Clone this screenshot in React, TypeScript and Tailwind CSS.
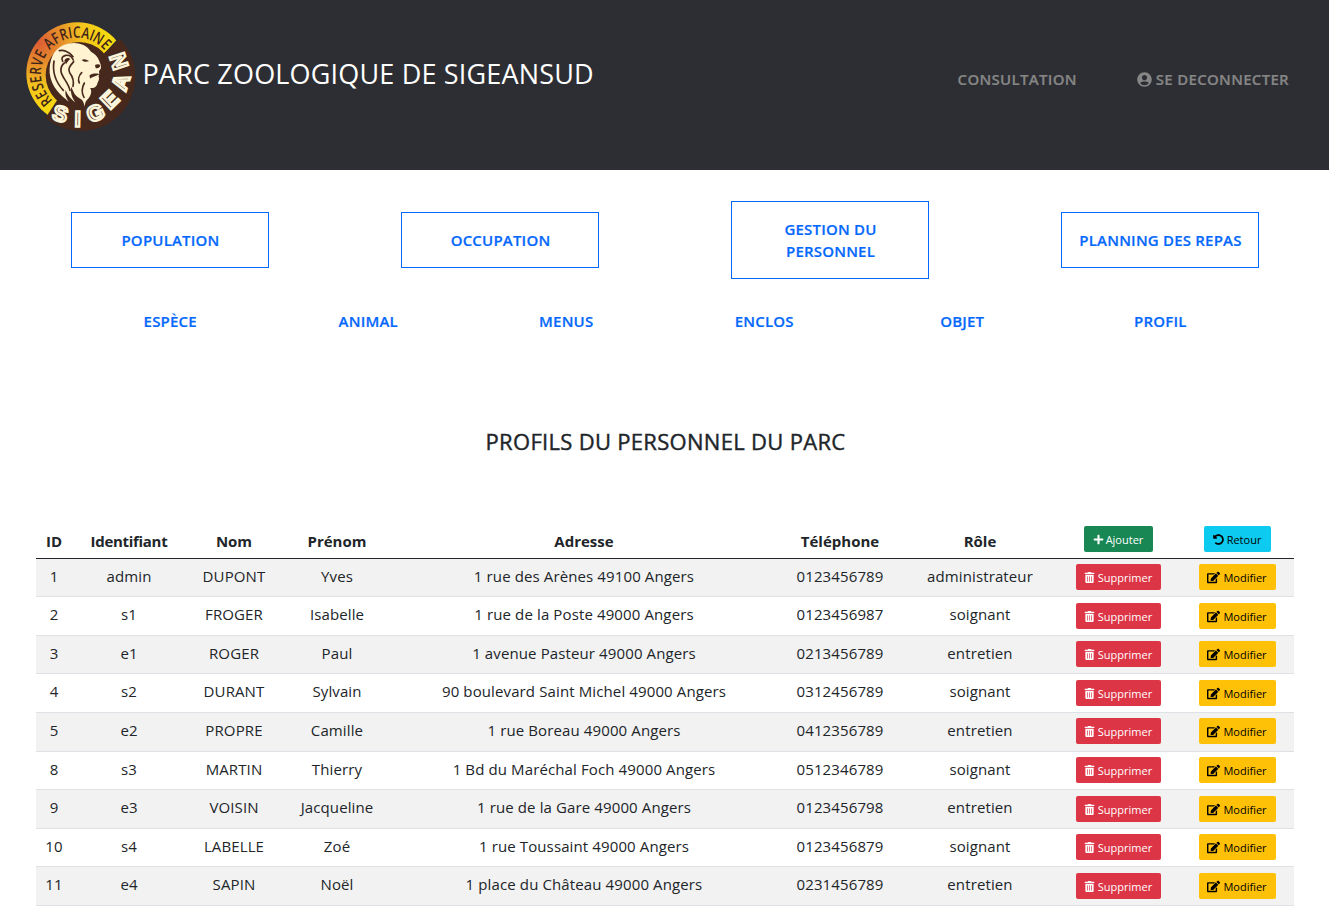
import React from "react";
import { FaEdit, FaPlus, FaTrashAlt, FaUndoAlt, FaUserCircle } from "react-icons/fa";

const sections = ["POPULATION", "OCCUPATION", "GESTION DU PERSONNEL", "PLANNING DES REPAS"];
const links = ["ESPÈCE", "ANIMAL", "MENUS", "ENCLOS", "OBJET", "PROFIL"];
const headings = ["ID", "Identifiant", "Nom", "Prénom", "Adresse", "Téléphone", "Rôle"];
const columns = [36, 114, 96, 110, 384, 128, 152, 124, 114];

const staff = [
  ["1", "admin", "DUPONT", "Yves", "1 rue des Arènes 49100 Angers", "0123456789", "administrateur"],
  ["2", "s1", "FROGER", "Isabelle", "1 rue de la Poste 49000 Angers", "0123456987", "soignant"],
  ["3", "e1", "ROGER", "Paul", "1 avenue Pasteur 49000 Angers", "0213456789", "entretien"],
  ["4", "s2", "DURANT", "Sylvain", "90 boulevard Saint Michel 49000 Angers", "0312456789", "soignant"],
  ["5", "e2", "PROPRE", "Camille", "1 rue Boreau 49000 Angers", "0412356789", "entretien"],
  ["8", "s3", "MARTIN", "Thierry", "1 Bd du Maréchal Foch 49000 Angers", "0512346789", "soignant"],
  ["9", "e3", "VOISIN", "Jacqueline", "1 rue de la Gare 49000 Angers", "0123456798", "entretien"],
  ["10", "s4", "LABELLE", "Zoé", "1 rue Toussaint 49000 Angers", "0123456879", "soignant"],
  ["11", "e4", "SAPIN", "Noël", "1 place du Château 49000 Angers", "0231456789", "entretien"],
];

const sigean = [
  { c: "S", x: 136, y: 311, r: 16 },
  { c: "I", x: 188, y: 327, r: 1 },
  { c: "G", x: 241, y: 308, r: -24 },
  { c: "E", x: 284, y: 269, r: -44 },
  { c: "A", x: 317, y: 216, r: -72 },
  { c: "N", x: 311, y: 154, r: -108 },
];

// Angles in degrees, clockwise from the right, of each letter on the ring.
const ringLetters: [string, number][] = [
  ["R", 138],
  ["E", 149.5],
  ["S", 161],
  ["E", 172],
  ["R", 184],
  ["V", 196.5],
  ["E", 208.5],
  ["A", 227],
  ["F", 239],
  ["R", 251],
  ["I", 260.5],
  ["C", 269.5],
  ["A", 282],
  ["I", 291.5],
  ["N", 301.5],
  ["E", 315],
];

function Logo() {
  return (
    <svg className="h-[112px] w-[110px] shrink-0" viewBox="30 30 330 336">
      <defs>
        <radialGradient id="ring" gradientUnits="userSpaceOnUse" cx="70" cy="95" r="210">
          <stop offset="0" stopColor="#dc5a35" />
          <stop offset="0.3" stopColor="#e58a2c" />
          <stop offset="0.65" stopColor="#f3c51e" />
          <stop offset="1" stopColor="#f7d90f" />
        </radialGradient>
        <clipPath id="darkSide">
          <path d="M328 74L400 80V400H80L84 335L130 265L265 132Z" />
        </clipPath>
        <clipPath id="sunSide">
          <path d="M98 320L132 265L190 195L264 134L316 78V0H0V330Z" />
        </clipPath>
      </defs>
      <circle cx="187" cy="190" r="153" fill="url(#ring)" clipPath="url(#sunSide)" />
      <circle cx="198" cy="200" r="163" fill="#46291c" clipPath="url(#darkSide)" />
      <circle cx="192" cy="196" r="100" fill="#46291c" />
      {ringLetters.map(([c, angle], i) => (
        <text
          key={i}
          transform={`translate(186 191) rotate(${angle + 90}) translate(0 -108) scale(0.76 1)`}
          textAnchor="middle"
          fontFamily="'Open Sans', sans-serif"
          fontWeight="600"
          fontSize="47"
          fill="#3f2519"
        >
          {c}
        </text>
      ))}
      {sigean.map((l) => (
        <text
          key={l.c}
          transform={`translate(${l.x} ${l.y}) rotate(${l.r})`}
          y="23"
          textAnchor="middle"
          fontFamily="'Liberation Sans', sans-serif"
          fontWeight="700"
          fontSize="66"
          fill="#46291c"
          stroke="#fdf6dc"
          strokeWidth="7"
        >
          {l.c}
        </text>
      ))}
      <path
        d="M104 190C102 150 115 118 146 105C174 93 211 98 228 125C238 131 245 136 249 145C252 153 258 163 258 171C258 180 251 181 252 187C255 192 249 195 252 204C253 211 247 218 246 224C243 233 232 235 225 234C234 244 225 262 216 270C210 276 210 284 209 290C207 280 204 270 196 266C178 257 176 246 169 230C165 249 172 264 181 277C170 269 156 254 152 239C149 252 153 263 161 275C137 256 109 232 104 190Z"
        fill="#fff3d2"
      />
      <g fill="none" stroke="#46291c" strokeWidth="5" strokeLinecap="round">
        <path d="M143 154C138 145 142 138 152 136C164 134 171 141 175 150" />
        <path d="M174 140C164 125 145 119 133 122" />
        <path d="M148 159C140 165 137 174 138 184C140 201 160 218 165 241" />
        <path d="M117 153C112 184 121 215 145 241" />
        <path d="M176 155C163 170 158 178 164 188C174 201 177 215 174 229" />
        <path d="M193 219C188 209 192 196 200 188" />
        <path d="M208 219C201 232 199 248 207 262" />
      </g>
      <path d="M148 153C150 144 160 141 166 147C161 151 157 156 153 163Z" fill="#46291c" />
      <path d="M200 150C208 145 217 149 222 154C213 156 205 156 200 150Z" fill="#46291c" />
      <path d="M240 165C246 161 253 162 256 166C255 173 247 177 242 174Z" fill="#46291c" />
      <path d="M223 197C231 190 241 190 253 192C247 199 233 198 226 206Z" fill="#46291c" />
    </svg>
  );
}

function SmallButton({ className, children }: { className: string; children: React.ReactNode }) {
  return (
    <button
      className={`inline-flex h-[26px] items-center justify-center rounded-[2px] pt-px text-[11px] leading-none ${className}`}
    >
      {children}
    </button>
  );
}

export default function App() {
  return (
    <div className="h-[906px] w-full overflow-hidden bg-white font-['Open_Sans',sans-serif] text-[15px] text-[#212529]">
      <header className="flex h-[170px] items-start bg-[#2d2e33] pt-5 pl-[25px]">
        <Logo />
        <h1 className="mt-[34px] ml-[7.5px] text-[27px] leading-[40px] tracking-[0.17px] whitespace-nowrap text-white">
          PARC ZOOLOGIQUE DE SIGEANSUD
        </h1>
        <nav className="mt-12 mr-10 ml-auto flex gap-[60px] leading-[22px] font-semibold tracking-[0.3px] text-[#868686] [-webkit-text-stroke:0.2px_#868686]">
          <a>CONSULTATION</a>
          <a className="flex items-center gap-1">
            <FaUserCircle className="size-[15px]" />
            SE DECONNECTER
          </a>
        </nav>
      </header>

      <nav className="flex h-[140px] flex-col font-semibold tracking-[0.2px] text-[#0568fd] [-webkit-text-stroke:0.2px_#0568fd]">
        <div className="flex h-[140px] shrink-0 items-center justify-between px-[71px] pr-[70px]">
          {sections.map((s) => (
            <a
              key={s}
              className="flex w-[198px] items-center justify-center border border-[#0568fd] py-4 pr-4 pl-[17px] text-center leading-[22px]"
            >
              {s === "GESTION DU PERSONNEL" ? (
                <span>
                  GESTION DU
                  <br />
                  PERSONNEL
                </span>
              ) : (
                <span className="whitespace-nowrap">{s}</span>
              )}
            </a>
          ))}
        </div>
        <div className="mx-auto grid w-[1188px] shrink-0 grid-cols-6 text-center leading-[22px]">
          {links.map((l) => (
            <a key={l} className="pl-[1.5px]">
              {l}
            </a>
          ))}
        </div>
      </nav>

      <h2 className="mt-[114px] pl-[2px] text-center text-[22px] leading-[34px] font-medium tracking-[0.3px] [-webkit-text-stroke:0.4px_#212529]">
        PROFILS DU PERSONNEL DU PARC
      </h2>

      <table className="mt-[66px] ml-9 w-[1258px] table-fixed border-collapse text-center">
        <colgroup>
          {columns.map((w, i) => (
            <col key={i} style={{ width: w }} />
          ))}
        </colgroup>
        <thead>
          <tr className="h-[34.2px] border-b border-[#212529]">
            {headings.map((h) => (
              <th key={h} className={h === "Identifiant" ? "p-0 font-bold tracking-[-0.3px]" : "p-0 font-bold"}>
                {h}
              </th>
            ))}
            <th className="p-0 pb-[3.6px] align-middle font-normal">
              <SmallButton className="w-[69px] gap-[2px] bg-[#198754] text-white">
                <FaPlus className="size-[11px]" />
                Ajouter
              </SmallButton>
            </th>
            <th className="p-0 pb-[3.6px] align-middle font-normal">
              <SmallButton className="w-[67px] gap-[3px] bg-[#0dcaf0] text-black">
                <FaUndoAlt className="size-[11px]" />
                Retour
              </SmallButton>
            </th>
          </tr>
        </thead>
        <tbody>
          {staff.map((row) => (
            <tr key={row[0]} className="h-[38.6px] border-b border-[#dee2e6] odd:bg-[#f2f2f2]">
              {row.map((cell, i) => (
                <td key={i} className="p-0 pb-[3.8px] leading-[22px] tracking-[0.12px] whitespace-nowrap">
                  {cell}
                </td>
              ))}
              <td className="p-0 pb-px align-middle leading-none">
                <SmallButton className="w-[85px] gap-[3px] bg-[#dc3545] text-white">
                  <FaTrashAlt className="size-[11px]" />
                  Supprimer
                </SmallButton>
              </td>
              <td className="p-0 pb-px align-middle leading-none">
                <SmallButton className="w-[77px] gap-[3px] bg-[#ffc107] text-black">
                  <FaEdit className="size-[13px]" />
                  Modifier
                </SmallButton>
              </td>
            </tr>
          ))}
        </tbody>
      </table>
    </div>
  );
}
